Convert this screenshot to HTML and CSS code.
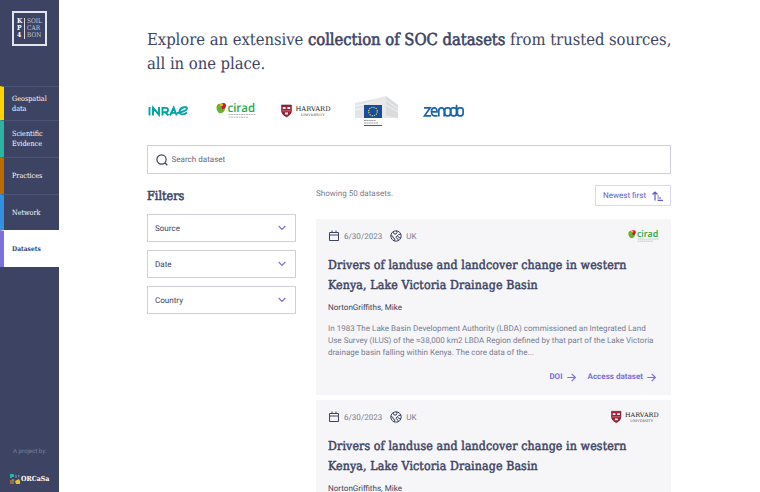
FILE: index.html
```html
<!DOCTYPE html>
<html lang="en">
<head>
<meta charset="utf-8">
<title>Datasets</title>
<link rel="stylesheet" href="styles.css">
</head>
<body>
<svg class="defs" width="0" height="0" aria-hidden="true">
  <symbol id="calendar" viewBox="0 0 12 12"><path d="M1.500 2.500h9v8h-9zM1.500 5h9M4 .5v2.500M8 .5v2.500" fill="none" stroke="currentColor"/></symbol>
  <symbol id="globe" viewBox="0 0 12 12"><g fill="none" stroke="currentColor"><circle cx="6" cy="6" r="5.200"/><path d="M3 1.900l1 2 2 .2 1-1.500L6.500.8M.9 5.500l2 .8.300 1.700 1.600.8-.3 2.100M11 7.800L8.800 7.600 7.500 5.700l1.300-1.400 2 .2M7.500 5.700L5.800 7.300 8 9.200l.2 1.500"/></g></symbol>
  <symbol id="chevron" viewBox="0 0 8 6"><path d="M.7 1L4 4.400 7.300 1" fill="none" stroke="currentColor" stroke-width="1.200"/></symbol>
  <symbol id="arrow" viewBox="0 0 9 9"><path d="M.3 4.500h8M4.700.8l3.700 3.700-3.700 3.700" fill="none" stroke="currentColor" stroke-width="1.200"/></symbol>
  <symbol id="cirad-leaf" viewBox="0 0 11 12"><path d="M5.500 2C2 1 .3 3.300.5 6c.2 3 2.200 5.300 4 5.300C8 11.300 10 7 9.300 3.500z" fill="#65b32e"/><path d="M5 1.500C8 .3 10.300 1 10 4 9.500 6.500 7.500 7 6 7.500z" fill="#d90d3b"/><circle cx="5.500" cy="2.800" r="1.500" fill="#f4b51d"/></symbol>
  <symbol id="shield" viewBox="0 0 11 14"><path d="M.5 1h10v6q0 3.500-5 6-5-2.500-5-6z" fill="#a51c30" stroke="#4b3035" stroke-width=".6"/><path d="M1.800 3h2.800v2H1.800zM6.400 3h2.800v2H6.400zM4 8.500h3v2H4z" fill="#fff"/><path d="M1 6.800h9" stroke="#d9a0aa" stroke-width=".6"/></symbol>
</svg>
<div class="page">
  <aside class="sidebar">
    <div class="brand"><div class="brand-mark"><span>K</span><span>P</span><span>4</span></div><div class="brand-name"><span>SOIL</span><span>CAR</span><span>BON</span></div></div>
    <nav class="nav">
      <a class="nav-item yellow">Geospatial<br>data</a>
      <a class="nav-item teal">Scientific<br>Evidence</a>
      <a class="nav-item orange">Practices</a>
      <a class="nav-item blue">Network</a>
      <a class="nav-item purple active">Datasets</a>
    </nav>
    <div class="credit">
      <p>A project by:</p>
      <div class="orcasa"><svg width="10" height="10" viewBox="0 0 10 10"><path d="M0 0h4v3H2v1H0z" fill="#2fb0a5"/><path d="M5 1h2v3H5z" fill="#457a9b"/><path d="M8 1h1.500v2H8z" fill="#78828f"/><path d="M0 6h4v4H0z" fill="#b5632e"/><path d="M2 5h2v2H2z" fill="#54a36c"/><path d="M5 7l4-2 1 2v3H6z" fill="#efc21a"/></svg><span>ORCaSa</span></div>
    </div>
  </aside>
  <main class="main">
    <h1 class="intro">Explore an extensive <b>collection of SOC datasets</b> from trusted sources,<br>all in one place.</h1>
    <div class="logos">
      <svg class="inrae" width="41" height="12" viewBox="0 0 41 12"><g fill="none" stroke="#00a3a6" stroke-width="1.900"><path d="M1.500 2v8.500M5 10.500V2.800l6 6.900V2M14.500 10.500V2.900h3.200q2.300.1 2.300 2.200t-2.300 2.200h-3.200M17.500 7.300l3 3.200M22 10.500L25.700 2.700l3 7.800M24 7.900h4"/><path d="M29 8c5-.5 10-3 10-4.800 0-1.700-6-1.700-7.300 2.300-1 4.500 4 5 7.300 2"/></g></svg>
      <svg class="cirad" width="40" height="17" viewBox="0 0 40 17"><use href="#cirad-leaf" width="11" height="12"/><text x="11.500" y="9.500" textLength="27.500" lengthAdjust="spacingAndGlyphs" class="cirad-text">cirad</text><path d="M12.500 12.500h27M12.500 15.200h20" stroke="#aaa" stroke-width=".8" stroke-dasharray="2 .5"/></svg>
      <svg class="harvard" width="50" height="14" viewBox="0 0 50 14"><use href="#shield" width="11" height="14"/><text x="14.500" y="7" textLength="35" lengthAdjust="spacingAndGlyphs" class="harvard-text">HARVARD</text><text x="20" y="12" textLength="24" lengthAdjust="spacingAndGlyphs" class="university-text">UNIVERSITY</text></svg>
      <svg class="eu" width="44" height="31" viewBox="0 0 44 31"><path d="M0 7l19-4v19H0z" fill="#e3e4e5"/><path d="M19 3l12-3v20l12 2H19z" fill="#e8e8e8"/><path d="M31 0v20l12 2V9z" fill="#d9dbdc"/><path d="M0 10l19-4M0 14l19-3M31 4l12 9M31 9l12 7" stroke="#fff" stroke-width=".6"/><path d="M9 9h18v13H9z" fill="#184c9c"/><circle cx="18" cy="15.500" r="4.300" fill="none" stroke="#e8d64c" stroke-width="1.200" stroke-dasharray="1.200 1.050"/><path d="M9 24.500h12M9 27h14" stroke="#777" stroke-width=".7" stroke-dasharray="2 .4"/><path d="M9 29.500h18" stroke="#2461b0"/></svg>
      <svg class="zenodo" width="41" height="14" viewBox="0 0 41 14"><g fill="none" stroke="#1764b5" stroke-width="1.700"><path d="M1 3.800h6.200L1.500 11.800h6.500"/><path d="M8.500 7.800h5.500q0-4-2.700-4-2.800 0-2.800 4t3 4h3"/><path d="M15.800 12.500V6.500q0-2.700 2.700-2.700t2.700 2.700v6"/><rect x="21.800" y="3.800" width="5.600" height="8" rx="2.300"/><rect x="27.800" y="3.800" width="5.800" height="8" rx="2.300"/><path d="M33.600 .8v11"/><rect x="34.400" y="3.800" width="5.700" height="8" rx="2.300"/></g></svg>
    </div>
    <div class="search"><svg width="12" height="12" viewBox="0 0 12 12"><path d="M8.800 8.800l2.500 2.500" stroke="#3c4363" stroke-width="1.300"/><circle cx="5.500" cy="5.500" r="4.600" fill="none" stroke="#3c4363" stroke-width="1.200"/></svg><span>Search dataset</span></div>
    <div class="columns">
      <section class="filters">
        <h2>Filters</h2>
        <div class="select">Source<svg width="8" height="6"><use href="#chevron"/></svg></div>
        <div class="select">Date<svg width="8" height="6"><use href="#chevron"/></svg></div>
        <div class="select">Country<svg width="8" height="6"><use href="#chevron"/></svg></div>
      </section>
      <section class="results">
        <div class="toolbar"><span class="count">Showing 50 datasets.</span><div class="sort"><span>Newest first</span><svg width="11" height="10" viewBox="0 0 11 10"><path d="M3 9.500V1M.5 3.500L3 1l2.500 2.500M5.500 5h1.500M5.500 7h3.500M5.500 9.300h5.500" fill="none" stroke="currentColor" stroke-width="1.200"/></svg></div></div>
        <article class="card">
          <div class="meta"><svg class="cal" width="12" height="12"><use href="#calendar"/></svg><span class="date">6/30/2023</span><svg class="glb" width="12" height="12"><use href="#globe"/></svg><span>UK</span><svg class="source" width="31" height="14" viewBox="0 0 40 17"><use href="#cirad-leaf" width="11" height="12"/><text x="11.500" y="9.500" textLength="27.500" lengthAdjust="spacingAndGlyphs" class="cirad-text">cirad</text><path d="M12.500 12.500h27M12.500 15.200h20" stroke="#aaa" stroke-width=".8" stroke-dasharray="2 .5"/></svg></div>
          <h3>Drivers of landuse and landcover change in western<br>Kenya, Lake Victoria Drainage Basin</h3>
          <p class="author">NortonGriffiths, Mike</p>
          <p class="desc">In 1983 The Lake Basin Development Authority (LBDA) commissioned an Integrated Land<br>Use Survey (ILUS) of the ≈38,000 km2 LBDA Region defined by that part of the Lake Victoria<br>drainage basin falling within Kenya. The core data of the...</p>
          <div class="links"><a>DOI<svg width="9" height="9"><use href="#arrow"/></svg></a><a>Access dataset<svg width="9" height="9"><use href="#arrow"/></svg></a></div>
        </article>
        <article class="card">
          <div class="meta"><svg class="cal" width="12" height="12"><use href="#calendar"/></svg><span class="date">6/30/2023</span><svg class="glb" width="12" height="12"><use href="#globe"/></svg><span>UK</span><svg class="source" width="48" height="14" viewBox="0 0 50 14"><use href="#shield" width="11" height="14"/><text x="14.500" y="7" textLength="35" lengthAdjust="spacingAndGlyphs" class="harvard-text">HARVARD</text><text x="20" y="12" textLength="24" lengthAdjust="spacingAndGlyphs" class="university-text">UNIVERSITY</text></svg></div>
          <h3>Drivers of landuse and landcover change in western<br>Kenya, Lake Victoria Drainage Basin</h3>
          <p class="author">NortonGriffiths, Mike</p>
        </article>
      </section>
    </div>
  </main>
</div>
</body>
</html>
```
FILE: styles.css
```css
* { box-sizing: border-box; }
body, h1, h2, h3, p { margin: 0; }
body { font-family: Roboto, "Liberation Sans", sans-serif; font-size: 8.050px; color: #3c4363; background: #fff; overflow: hidden; text-rendering: geometricPrecision; }
svg { display: block; flex: none; overflow: visible; }
.defs { position: absolute; }
.page { display: flex; height: 492px; overflow: hidden; }
.sidebar { width: 59px; flex: none; background: #3c4363; color: #fff; display: flex; flex-direction: column; font-family: "Roboto Slab", "DejaVu Serif Condensed", "DejaVu Serif", serif; }
.brand { width: 35px; height: 35px; margin: 11px 0 40px 12px; border: 2px solid #e4e5ec; display: flex; align-items: center; padding-left: 3px; line-height: 7px; font-size: 6.8px; }
.brand span { display: block; }
.brand-mark { font-weight: 700; width: 8px; flex: none; border-right: 1px solid #d4d6e0; }
.brand-name { padding-left: 2px; color: #c9ccd9; font-size: 6.5px; }
.nav-item { display: flex; align-items: center; height: 36.7px; padding-left: 8px; border-left: 4px solid; border-top: 1px solid #4c5475; font-size: 7.200px; line-height: 10px; color: #fff; }
.yellow { border-left-color: #ffd400; height: 34.3px; }
.teal { border-left-color: #2bb5a0; }
.orange { border-left-color: #c06b00; }
.blue { border-left-color: #3390e0; }
.purple { border-left-color: #7b70dc; }
.active { background: #fff; color: #3c4363; font-size: 6.6px; font-weight: 700; border-top-color: #fff; }
.credit { margin-top: auto; padding-bottom: 8px; }
.credit p { font: 6.100px/8px Roboto, sans-serif; color: #7d839b; padding-left: 13px; margin-bottom: 18px; }
.orcasa { display: flex; align-items: center; gap: 1px; padding-left: 10px; font-size: 7px; line-height: 10px; font-weight: 700; }
.main { width: 524px; margin-left: 88px; padding-top: 28px; }
.intro { font: 400 16.5px/24px "Roboto Slab", "DejaVu Serif Condensed", "DejaVu Serif", serif; letter-spacing: -.040px; white-space: nowrap; }
.intro b { font-weight: 400; -webkit-text-stroke: .55px #3c4363; }
.logos { display: flex; align-items: center; height: 32px; margin-top: 19px; padding-left: 1px; }
.cirad { margin-left: 27px; margin-top: -1px; }
.cirad-text { font: 600 12px "Open Sans", sans-serif; fill: #25a848; }
.harvard { margin-left: 25px; }
.harvard-text { font: 6.500px "DejaVu Serif", serif; fill: #222; }
.university-text { font: 4px "Liberation Serif", serif; fill: #444; }
.eu { margin-left: 24px; }
.zenodo { margin-left: 24px; }
.search { display: flex; align-items: center; gap: 3.500px; height: 29px; margin-top: 18px; border: 1px solid #cfd1d9; padding-left: 8px; color: #656b84; }
.columns { display: flex; gap: 20px; }
.filters { width: 149px; padding-top: 12px; }
.filters h2 { font: 400 12.500px/20px "Roboto Slab", "DejaVu Serif Condensed", "DejaVu Serif", serif; -webkit-text-stroke: .5px #3c4363; margin-bottom: 8px; }
.select { height: 28px; border: 1px solid #cfd1d9; margin-bottom: 8px; padding: 0 9px 0 7px; display: flex; justify-content: space-between; align-items: center; }
.select svg { color: #7b70dc; }
.results { width: 355px; padding-top: 11px; }
.toolbar { display: flex; justify-content: space-between; height: 34px; }
.count { color: #777d94; line-height: 17px; }
.sort { width: 76px; height: 21px; border: 1px solid #d9d7f1; display: flex; align-items: center; justify-content: space-between; padding: 0 7px; color: #6558cf; }
.card { height: 176px; margin-bottom: 5px; background: #f6f6f8; padding: 10px 12px; }
.meta { display: flex; align-items: center; height: 14px; color: #777d94; }
.cal, .glb { color: #3c4363; }
.date { margin: 0 8px 0 4px; }
.glb { margin-right: 4px; }
.source { margin-left: auto; }
.card h3 { font: 400 12.300px/20px "Roboto Slab", "DejaVu Serif Condensed", "DejaVu Serif", serif; letter-spacing: .110px; -webkit-text-stroke: .45px #3c4363; margin-top: 12px; white-space: nowrap; }
.author { line-height: 10px; margin-top: 8px; }
.desc { line-height: 12px; margin-top: 10px; color: #777d94; white-space: nowrap; }
.links { display: flex; justify-content: flex-end; gap: 12px; margin-top: 13px; line-height: 10px; font-weight: 700; color: #7b70dc; padding-right: 3px; }
.links a { display: flex; align-items: center; gap: 4px; }
```
